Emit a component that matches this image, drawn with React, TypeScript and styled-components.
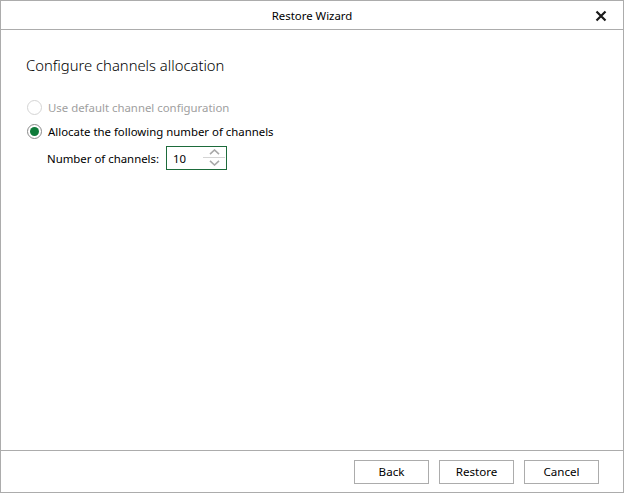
import React from 'react'
import styled, { createGlobalStyle } from 'styled-components'

const GlobalStyle = createGlobalStyle`
  html, body {
    margin: 0;
    padding: 0;
    background: #ffffff;
  }
  body {
    font-family: 'Noto Sans', 'Open Sans', sans-serif;
    font-size: 11.4px;
    color: #000;
  }
`

const Window = styled.div`
  box-sizing: border-box;
  width: 624px;
  height: 493px;
  border: 1px solid #acacac;
  display: flex;
  flex-direction: column;
  background: #fff;
`

const TitleBar = styled.div`
  height: 28px;
  flex: none;
  border-bottom: 1px solid #acacac;
  display: flex;
  align-items: center;
  justify-content: center;
  position: relative;
`

const CloseButton = styled.button`
  position: absolute;
  right: 14px;
  top: 7px;
  width: 16px;
  height: 16px;
  padding: 0;
  border: none;
  background: none;
  display: flex;
  align-items: center;
  justify-content: center;
`

const Body = styled.div`
  flex: 1;
  padding: 26px 24px 0 24px;
  display: flex;
  flex-direction: column;
`

const Heading = styled.h1`
  margin: 0 0 23px 1px;
  font-size: 14.8px;
  font-weight: 300;
  line-height: 19px;
`

const Options = styled.div`
  display: flex;
  flex-direction: column;
  gap: 6px;
  padding-left: 2px;
`

const RadioRow = styled.label<{ $disabled?: boolean }>`
  display: flex;
  align-items: center;
  gap: 6px;
  height: 18px;
  color: ${p => (p.$disabled ? '#a0a0a0' : '#000')};
`

const RadioCircle = styled.span<{ $checked?: boolean; $disabled?: boolean }>`
  box-sizing: border-box;
  width: 15px;
  height: 15px;
  border-radius: 50%;
  border: 1px solid ${p => (p.$disabled ? '#d4d4d4' : '#8a8a8a')};
  display: flex;
  align-items: center;
  justify-content: center;
  &::after {
    content: '';
    display: ${p => (p.$checked ? 'block' : 'none')};
    width: 9px;
    height: 9px;
    border-radius: 50%;
    background: #0f7b3a;
  }
`

const FieldRow = styled.div`
  display: flex;
  align-items: center;
  gap: 7px;
  margin-top: 6px;
  padding-left: 22px;
`

const SpinBox = styled.div`
  box-sizing: border-box;
  width: 61px;
  height: 24px;
  border: 1px solid #1d6b3b;
  display: flex;
  align-items: center;
  padding-left: 6px;
`

const SpinValue = styled.span`
  flex: 1;
`

const SpinArrows = styled.div`
  box-sizing: border-box;
  width: 24px;
  height: 22px;
  padding: 2px 0 3px;
  display: flex;
  flex-direction: column;
  justify-content: space-between;
  align-items: center;
`

const SpinDivider = styled.div`
  width: 22px;
  height: 1px;
  background: #d4d4d4;
`

const Footer = styled.div`
  height: 41px;
  flex: none;
  border-top: 1px solid #acacac;
  display: flex;
  align-items: center;
  justify-content: flex-end;
  gap: 10px;
  padding-right: 24px;
`

const Button = styled.button`
  box-sizing: border-box;
  width: 75px;
  height: 24px;
  border: 1px solid #acacac;
  background: #fff;
  font-family: inherit;
  font-size: 11.6px;
  color: #000;
  padding: 0;
`

const Chevron = ({ up }: { up?: boolean }) => (
  <svg width="11" height="6" viewBox="0 0 11 6">
    <path
      d={up ? 'M1 5.2 L5.5 1 L10 5.2' : 'M1 0.8 L5.5 5 L10 0.8'}
      fill="none"
      stroke="#a8a8a8"
      strokeWidth="1.6"
    />
  </svg>
)

export default function App() {
  return (
    <>
      <GlobalStyle />
      <Window>
        <TitleBar>
          Restore Wizard
          <CloseButton aria-label="Close">
            <svg width="12" height="12" viewBox="0 0 12 12">
              <path d="M1.5 1.5 L10.5 10.5 M10.5 1.5 L1.5 10.5" stroke="#1a1a1a" strokeWidth="2.2" />
            </svg>
          </CloseButton>
        </TitleBar>
        <Body>
          <Heading>Configure channels allocation</Heading>
          <Options>
            <RadioRow $disabled>
              <RadioCircle $disabled />
              Use default channel configuration
            </RadioRow>
            <RadioRow>
              <RadioCircle $checked />
              Allocate the following number of channels
            </RadioRow>
          </Options>
          <FieldRow>
            <span>Number of channels:</span>
            <SpinBox>
              <SpinValue>10</SpinValue>
              <SpinArrows>
                <Chevron up />
                <SpinDivider />
                <Chevron />
              </SpinArrows>
            </SpinBox>
          </FieldRow>
        </Body>
        <Footer>
          <Button>Back</Button>
          <Button>Restore</Button>
          <Button>Cancel</Button>
        </Footer>
      </Window>
    </>
  )
}
